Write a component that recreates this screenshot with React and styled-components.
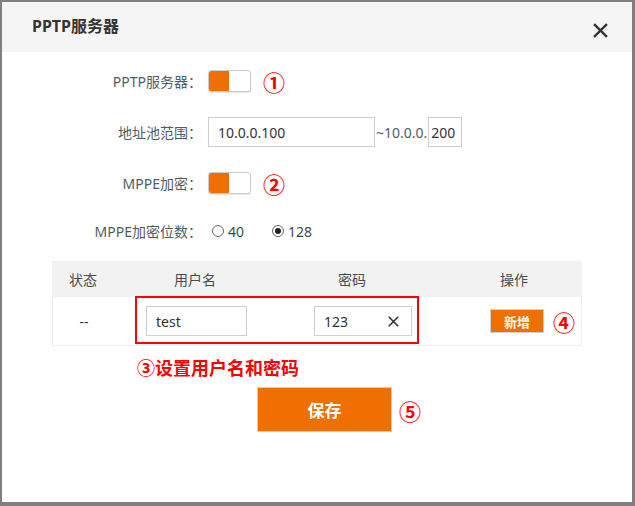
import React from 'react'
import styled, { createGlobalStyle } from 'styled-components'

const GlobalStyle = createGlobalStyle`
  html, body {
    margin: 0;
    padding: 0;
    background: #7f7f7f;
  }
  body {
    font-family: "Noto Sans", "Noto Sans CJK SC", sans-serif;
  }
`
const Frame = styled.div`
  width: 635px;
  height: 506px;
  box-sizing: border-box;
  padding: 2px 3px 4px 2px;
  background: #7f7f7f;
`
const Dialog = styled.div`
  height: 100%;
  background: #fff;
  display: flex;
  flex-direction: column;
`
const Header = styled.div`
  height: 50px;
  flex-shrink: 0;
  background: #f5f5f5;
  display: flex;
  align-items: center;
  justify-content: space-between;
  padding: 0 24px 0 30px;
  box-sizing: border-box;
`
const Title = styled.h1`
  margin: 0;
  font-size: 16px;
  font-weight: 700;
  color: #333;
  margin-top: -4px;
`
const Close = styled.button`
  border: 0;
  background: none;
  padding: 0;
  width: 15px;
  height: 15px;
  margin-top: 6px;
  cursor: pointer;
  display: flex;
`
const Body = styled.div`
  padding-top: 14px;
`
const Row = styled.div`
  display: flex;
  align-items: center;
  height: 30px;
  margin-bottom: ${(p) => p.$after ?? 21}px;
`
const Label = styled.label`
  width: 206px;
  text-align: right;
  padding-right: 6px;
  box-sizing: border-box;
  font-size: 14px;
  color: #4f5d66;
  flex-shrink: 0;
`
const Toggle = styled.div`
  width: 43px;
  height: 22px;
  box-sizing: border-box;
  border: 1px solid #c9ced2;
  border-radius: 3px;
  background: #fff;
  display: flex;
  overflow: hidden;
  box-shadow: 0 1px 1px rgba(0, 0, 0, 0.1);
  span {
    width: 20px;
    background: #ef7000;
  }
`
const Mark = styled.span`
  color: #f00;
  font-family: "Noto Sans CJK SC", sans-serif;
  font-weight: 700;
  font-size: 22px;
  line-height: 1;
  margin-left: ${(p) => p.$ml || 12}px;
`
const Input = styled.input`
  box-sizing: border-box;
  width: ${(p) => p.$w}px;
  height: 30px;
  border: 1px solid #cfcfcf;
  padding: 0 ${(p) => p.$pl ?? 9}px;
  font-family: "Noto Sans", sans-serif;
  font-size: 14px;
  color: #333;
  outline: none;
  border-radius: 0;
`
const Sep = styled.span`
  font-size: 14px;
  color: #4f5d66;
  margin: 0 1px;
`
const Radio = styled.label`
  display: inline-flex;
  align-items: center;
  font-size: 14px;
  color: #3c4a52;
  margin-left: ${(p) => p.$ml}px;
  i {
    width: 12px;
    height: 12px;
    box-sizing: border-box;
    border: 1px solid #666;
    border-radius: 50%;
    margin-right: 4px;
    display: flex;
    align-items: center;
    justify-content: center;
  }
  i::after {
    content: '';
    width: 6px;
    height: 6px;
    border-radius: 50%;
    background: ${(p) => (p.$checked ? '#222' : 'transparent')};
  }
`
const Table = styled.div`
  margin: 15px 0 0 50px;
  width: 530px;
`
const Grid = styled.div`
  display: grid;
  grid-template-columns: 62px 162px 152px 1fr;
  align-items: center;
`
const HeadRow = styled(Grid)`
  height: 36px;
  background: #f2f2f2;
  font-size: 14px;
  color: #4a4a4a;
  text-align: center;
  div:last-child {
    padding-left: 18px;
  }
`
const DataRow = styled(Grid)`
  position: relative;
  height: 49px;
  box-sizing: border-box;
  border: 1px solid #eeeeee;
  border-top: 0;
  font-size: 14px;
  color: #333;
`
const Cell = styled.div`
  display: flex;
  align-items: center;
  justify-content: ${(p) => (p.$center ? 'center' : 'flex-start')};
  padding-left: ${(p) => p.$pl || 0}px;
`
const PwdBox = styled.div`
  position: relative;
  display: flex;
  align-items: center;
  svg {
    position: absolute;
    right: 13px;
  }
`
const Highlight = styled.div`
  position: absolute;
  left: 82px;
  top: -1px;
  width: 284px;
  height: 48px;
  box-sizing: border-box;
  border: 2px solid #f00;
  pointer-events: none;
`
const SmallButton = styled.button`
  width: 54px;
  height: 24px;
  background: #ef7000;
  border: 1px solid #d0d0d0;
  color: #fff;
  font-family: "Noto Sans CJK SC", sans-serif;
  font-size: 13px;
  font-weight: 700;
  padding: 0;
`
const Note = styled.div`
  margin: 9px 0 0 135px;
  color: #f00;
  font-family: "Noto Sans CJK SC", sans-serif;
  font-weight: 700;
  font-size: 18px;
  line-height: 24px;
`
const Footer = styled.div`
  display: flex;
  align-items: center;
  margin: 8px 0 0 255px;
`
const SaveButton = styled.button`
  width: 135px;
  height: 45px;
  background: #ef7000;
  border: 1px solid #d0d0d0;
  color: #fff;
  font-family: "Noto Sans CJK SC", sans-serif;
  font-size: 17px;
  font-weight: 700;
  padding: 0;
`

const XIcon = ({ size = 14, w = 2 }) => (
  <svg width={size} height={size} viewBox="0 0 14 14">
    <path d="M1 1L13 13M13 1L1 13" stroke="#333" strokeWidth={w} />
  </svg>
)

export default function App() {
  return (
    <Frame>
      <GlobalStyle />
      <Dialog>
        <Header>
          <Title>PPTP服务器</Title>
          <Close>
            <XIcon size={15} w={2.2} />
          </Close>
        </Header>
        <Body>
          <Row>
            <Label>PPTP服务器：</Label>
            <Toggle>
              <span />
            </Toggle>
            <Mark>①</Mark>
          </Row>
          <Row>
            <Label>地址池范围：</Label>
            <Input $w={167} defaultValue="10.0.0.100" />
            <Sep>~10.0.0.</Sep>
            <Input $w={34} $pl={2} defaultValue="200" />
          </Row>
          <Row $after={18}>
            <Label>MPPE加密：</Label>
            <Toggle>
              <span />
            </Toggle>
            <Mark>②</Mark>
          </Row>
          <Row $after={0}>
            <Label>MPPE加密位数：</Label>
            <Radio $ml={4}>
              <i />
              40
            </Radio>
            <Radio $ml={28} $checked>
              <i />
              128
            </Radio>
          </Row>
          <Table>
            <HeadRow>
              <div>状态</div>
              <div>用户名</div>
              <div>密码</div>
              <div>操作</div>
            </HeadRow>
            <DataRow>
              <Cell $center>--</Cell>
              <Cell $pl={31}>
                <Input $w={101} defaultValue="test" />
              </Cell>
              <Cell $pl={37}>
                <PwdBox>
                  <Input $w={98} defaultValue="123" />
                  <XIcon size={11} w={2} />
                </PwdBox>
              </Cell>
              <Cell $pl={61}>
                <SmallButton>新增</SmallButton>
                <Mark $ml={9}>④</Mark>
              </Cell>
              <Highlight />
            </DataRow>
          </Table>
          <Note>③设置用户名和密码</Note>
          <Footer>
            <SaveButton>保存</SaveButton>
            <Mark $ml={7}>⑤</Mark>
          </Footer>
        </Body>
      </Dialog>
    </Frame>
  )
}
